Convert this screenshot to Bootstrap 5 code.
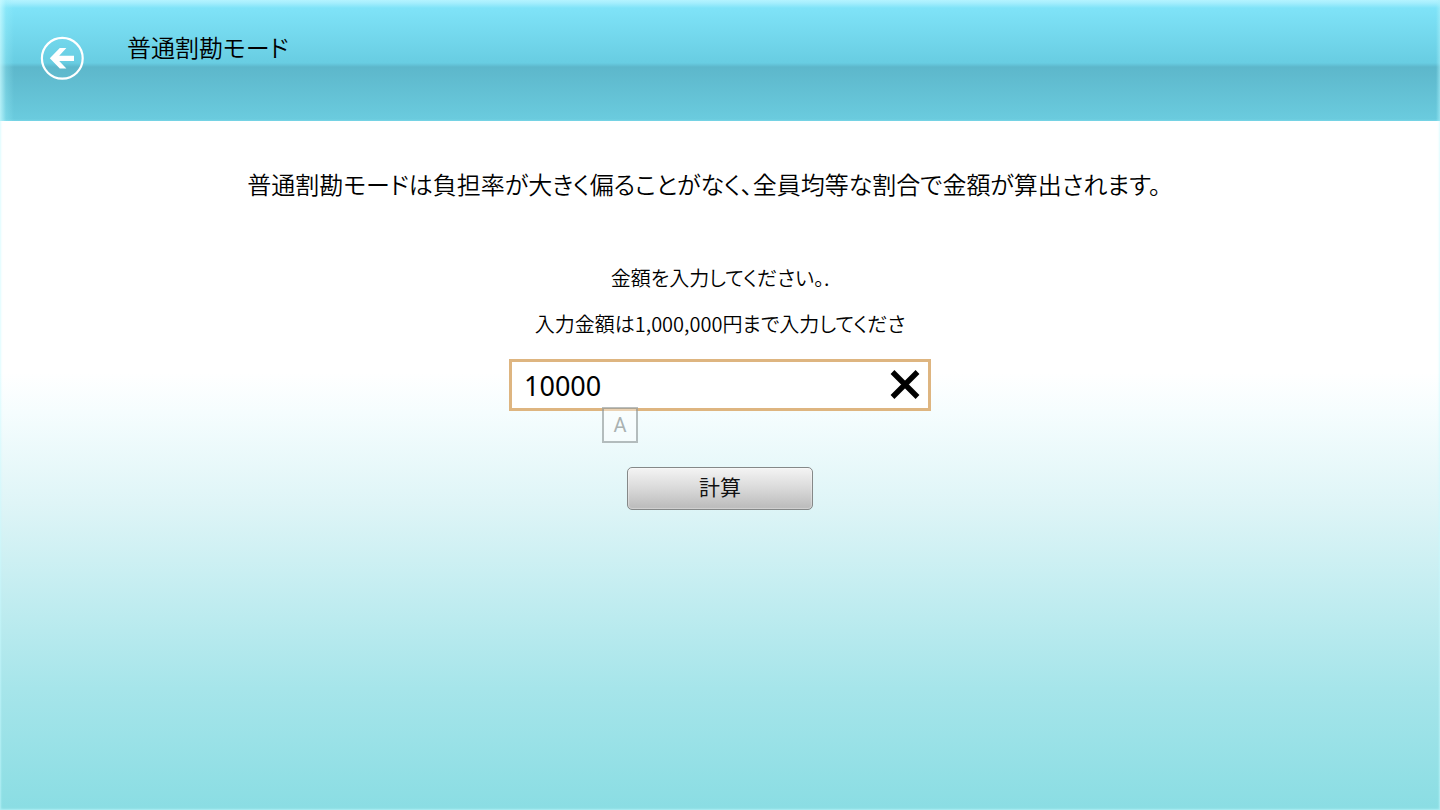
<!DOCTYPE html>
<html lang="ja">
<head>
<meta charset="utf-8">
<meta name="viewport" content="width=device-width, initial-scale=1">
<title>普通割勘モード</title>
<link href="https://cdn.jsdelivr.net/npm/bootstrap@5.3.0/dist/css/bootstrap.min.css" rel="stylesheet">
<style>
  body {
    font-family: "Noto Sans", "Noto Sans CJK JP", sans-serif;
    font-feature-settings: "palt";
    color: #000;
    background: linear-gradient(#fff 46%, #f5fdfe 51%, #dff5f7 62%, #a6e5ea 85%, #8adde3 100%);
    box-shadow: inset 0 0 2px 1px rgba(200, 250, 255, .6);
  }
  .app-header {
    min-height: 121px;
    padding: 28px 40px 0;
    gap: 43px;
    background:
      linear-gradient(90deg, rgba(200, 250, 255, .8), rgba(160, 240, 250, .3) 6px, transparent 14px),
      linear-gradient(270deg, rgba(170, 240, 250, .6), transparent 4px),
      linear-gradient(#b4f3ff 0, #a5eefd 3px, #7fe3f8 8px, #68cde2 63px, #5db7cb 67px, #6acbde 119px, #78d5e6 121px);
  }
  .jp-text { font-family: "Noto Sans CJK JP DemiLight", "Noto Sans CJK JP", sans-serif; font-weight: 350; }
  .text-title { font-size: 24px; line-height: 38px; }
  .text-note { font-size: 20px; line-height: 30px; }
  .back-btn { width: 44px; height: 44px; margin-top: 8px; }
  .main-area { padding: 44px 16px 16px; }
  .intro { margin-bottom: 60px; margin-right: 32px; }
  .amount-box { width: 422px; max-width: 100%; margin-top: 20px; }
  .amount-group { height: 52px; border: 3px solid #deb580; background: #fff; }
  .amount-input { font-family: "Noto Sans", sans-serif; font-size: 27px; line-height: 40px; padding: 2px 12px 0; color: #000; }
  .clear-btn { width: 46px; }
  .ime-mark {
    top: 48px; left: 93px; width: 36px; height: 36px;
    border: 2px solid rgba(100, 110, 110, .45);
    background: rgba(255, 255, 255, .4);
    font-family: Roboto, sans-serif; font-size: 20px; color: #aab2b2;
  }
  .calc-btn {
    width: 186px; height: 43px; margin-top: 56px;
    border: 1px solid #858888; border-radius: 5px;
    background: linear-gradient(#f4f4f4, #d9d9d9 50%, #bababa);
    box-shadow: inset 0 0 1px 1px rgba(255, 255, 255, .35);
    font-size: 21px; line-height: 32px; padding: 0 0 4px; color: #111;
  }
</style>
</head>
<body class="min-vh-100">
<header class="app-header d-flex align-items-start">
  <button type="button" class="back-btn btn p-0 border-0 d-flex" aria-label="戻る">
    <svg width="44" height="44" viewBox="0 0 44 44" fill="none" aria-hidden="true">
      <circle cx="22.3" cy="22.3" r="20.4" stroke="#fff" stroke-width="2.2"/>
      <path d="M9.8 22.3 19.8 12H26.4l-7.2 7.7H34v5.2H19.2L26.4 32.4h-6.6z" fill="#fff"/>
    </svg>
  </button>
  <h1 class="jp-text text-title m-0">普通割勘モード</h1>
</header>
<main class="main-area d-flex flex-column align-items-center">
  <p class="intro jp-text text-title">普通割勘モードは負担率が大きく偏ることがなく、全員均等な割合で金額が算出されます。</p>
  <label for="amount" class="jp-text text-note mb-3">金額を入力してください。.</label>
  <p id="limit" class="jp-text text-note m-0">入力金額は1,000,000円まで入力してくださ</p>
  <div class="amount-box position-relative">
    <div class="amount-group d-flex">
      <input id="amount" class="amount-input form-control border-0 rounded-0 shadow-none bg-transparent" type="text" inputmode="numeric" value="10000" aria-describedby="limit">
      <button type="button" class="clear-btn btn p-0 border-0 flex-shrink-0 d-flex align-items-center justify-content-center" aria-label="クリア">
        <svg width="30" height="30" viewBox="0 0 30 30" aria-hidden="true"><path d="M2.5 2 27.5 27M27.5 2 2.5 27" stroke="#000" stroke-width="5.4"/></svg>
      </button>
    </div>
    <span class="ime-mark position-absolute d-flex align-items-center justify-content-center">A</span>
  </div>
  <button type="button" class="calc-btn btn">計算</button>
</main>
<script src="https://cdn.jsdelivr.net/npm/bootstrap@5.3.0/dist/js/bootstrap.bundle.min.js"></script>
</body>
</html>
